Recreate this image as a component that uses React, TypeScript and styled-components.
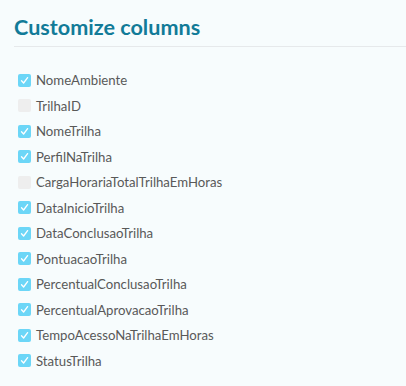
import React, { useLayoutEffect, useRef } from "react";
import styled, { createGlobalStyle } from "styled-components";

const Global = createGlobalStyle`
  html, body { margin: 0; padding: 0; background: #f7fcfd; }
  body { font-family: "Nunito", Lato, "Noto Sans", sans-serif; }
`;

const Panel = styled.div`
  width: 406px;
  height: 386px;
  background: #f7fcfd;
  padding: 14px 0 0 14px;
  box-sizing: border-box;
  display: flex;
  flex-direction: column;
  overflow: hidden;
`;

const Title = styled.h2`
  margin: 0;
  font-family: Lato, "Noto Sans", sans-serif;
  font-weight: 700;
  font-size: 21.6px;
  line-height: 26px;
  color: #127b98;
  padding-bottom: 6px;
  border-bottom: 1px solid #e6e9eb;
`;

const List = styled.div`
  margin-top: 18px;
  height: 308px;
  overflow: hidden;
  display: flex;
  flex-direction: column;
`;

const Row = styled.label`
  display: flex;
  align-items: center;
  gap: 5px;
  height: 25.5px;
  flex: none;
  padding-left: 4px;
  font-family: Lato, "Noto Sans", sans-serif;
  font-size: 13.2px;
  color: #595959;
`;

const Box = styled.span<{ $checked: boolean }>`
  width: 13px;
  height: 13px;
  border-radius: 2px;
  background: ${(p) => (p.$checked ? "#6cd6f7" : "#eeeeee")};
  display: flex;
  align-items: center;
  justify-content: center;
  flex: none;
`;

const items: [string, boolean][] = [
  ["IdAmbiente", false],
  ["NomeAmbiente", true],
  ["TrilhaID", false],
  ["NomeTrilha", true],
  ["PerfilNaTrilha", true],
  ["CargaHorariaTotalTrilhaEmHoras", false],
  ["DataInicioTrilha", true],
  ["DataConclusaoTrilha", true],
  ["PontuacaoTrilha", true],
  ["PercentualConclusaoTrilha", true],
  ["PercentualAprovacaoTrilha", true],
  ["TempoAcessoNaTrilhaEmHoras", true],
  ["StatusTrilha", true],
];

const Check = () => (
  <svg width="9" height="9" viewBox="0 0 9 9">
    <path d="M1.5 4.8 L3.6 7 L7.6 1.6" fill="none" stroke="#fff" strokeWidth="1.3" strokeLinecap="round" strokeLinejoin="round" />
  </svg>
);

export default function App() {
  const ref = useRef<HTMLDivElement>(null);
  useLayoutEffect(() => {
    if (ref.current) ref.current.scrollTop = 23;
  }, []);
  return (
    <>
      <Global />
      <Panel>
        <Title>Customize columns</Title>
        <List ref={ref}>
          {items.map(([name, c]) => (
            <Row key={name}>
              <Box $checked={c}>{c && <Check />}</Box>
              {name}
            </Row>
          ))}
        </List>
      </Panel>
    </>
  );
}
